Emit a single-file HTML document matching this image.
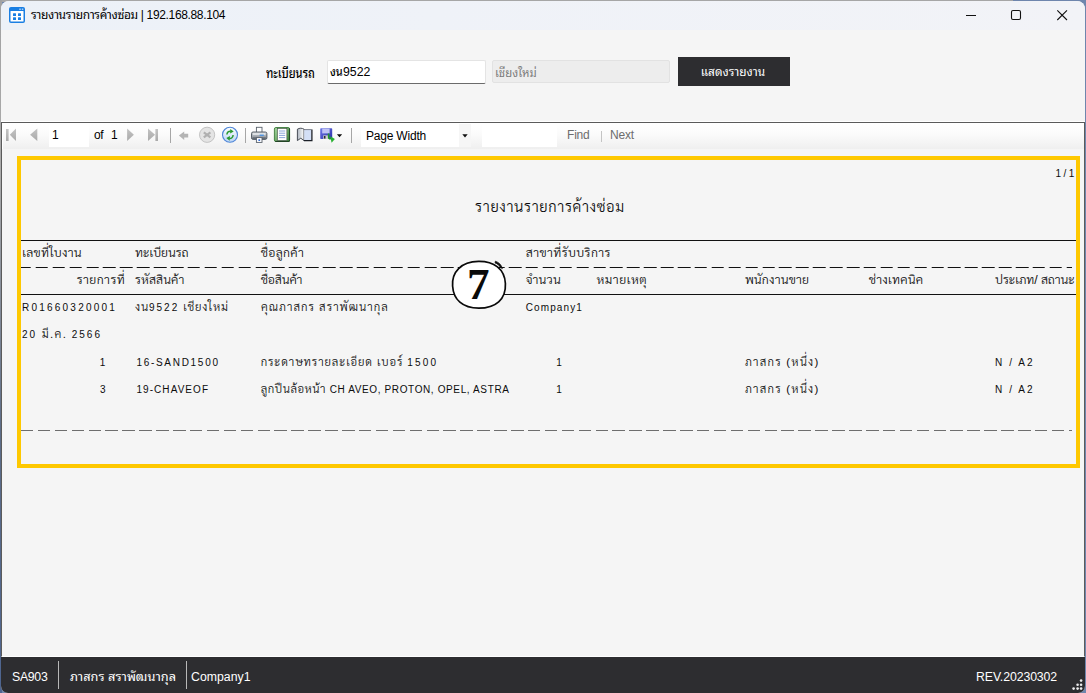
<!DOCTYPE html>
<html lang="th">
<head>
<meta charset="utf-8">
<title>รายงานรายการค้างซ่อม</title>
<style>
*{box-sizing:border-box;margin:0;padding:0}
html,body{width:1086px;height:693px;overflow:hidden}
body{position:relative;background:#6f86ad;
 font-family:"Liberation Sans","Noto Sans Thai Looped","Loma",sans-serif;color:#000}
.abs{position:absolute}
#win{position:absolute;left:1px;top:1px;width:1084px;height:692px;background:#f5f5f5;border-radius:8px 8px 7px 7px;overflow:hidden}
#titlebar{position:absolute;left:0;top:0;width:1084px;height:29px;background:linear-gradient(90deg,#ecf1f8 0,#eff2f8 40%,#f2f3f7 100%)}
#te{position:absolute;left:0;top:0;width:1086px;height:2px;background:linear-gradient(90deg,#a6a6a6 0,#a6a6a6 1013px,#6f86ad 1013px)}
#le{position:absolute;left:0;top:0;width:2px;height:693px;background:linear-gradient(180deg,#a2a2a2 0,#ababab 25%,#5d6d88 62%,#4e6590 100%)}
#titletext{position:absolute;left:30px;top:6px;font-size:12px;line-height:16px;white-space:nowrap;letter-spacing:-0.35px}
.t{position:absolute;white-space:nowrap;line-height:1}
/* form */
#lbl{left:265px;top:63px;font-size:13.9px;font-weight:500;line-height:18px;transform:scaleX(.8);transform-origin:0 0}
#tb1{position:absolute;left:326px;top:59px;width:159px;height:24px;background:#fff;border:1px solid #e4e4e4;border-bottom:1px solid #6b6b6b;border-radius:2px}
#tb1 span{position:absolute;left:2px;top:2px;font-size:12.3px;line-height:18px}
#tb1 b{font-weight:500;font-size:12px;display:inline-block;transform:scaleX(.92);transform-origin:0 50%;margin-right:-1px}
#tb2{position:absolute;left:491px;top:59px;width:178px;height:23px;background:#ededed;border:1px solid #e2e2e2;border-radius:2px}
#tb2 span{position:absolute;left:2px;top:3px;font-size:12.5px;line-height:18px;color:#7b7b7b;transform:scaleX(.91);transform-origin:0 0}
#btn{position:absolute;left:677px;top:56px;width:112px;height:29px;background:#2d2d30;color:#fff;text-align:center;font-size:12.5px;line-height:31px}
#btn span{display:inline-block;transform:scaleX(.95);transform-origin:50% 50%;margin-left:-3px}
/* viewer */
#viewer{position:absolute;left:0;top:120px;width:1084px;height:1px;background:#fff}
#vb{position:absolute;left:0;top:121px;width:1084px;height:535px;border:1px solid #5b5b5b;border-bottom:1px solid #fff;background:#f5f5f5}
#toolbar{position:absolute;left:0;top:0;width:1082px;height:26px;border-left:1px solid #fff;border-top:1px solid #fff;background:linear-gradient(180deg,#ffffff 0,#fbfbfb 40%,#efefef 100%)}
.tbx{position:absolute;background:#fff;top:0;height:23px}
.tt{position:absolute;font-size:12px;line-height:14px;white-space:nowrap}
.sep{position:absolute;top:4px;width:1px;height:15px;background:#a6a6a6}
/* report */
#yel{position:absolute;left:16px;top:155px;width:1063px;height:312px;border:4px solid #fec800}
.r{position:absolute;white-space:nowrap;font-family:"Liberation Sans","Sarabun","Loma",sans-serif;font-weight:300;font-size:11px;line-height:16px;color:#0c0c0c}
.th{font-size:12.3px}
.td{font-size:11.4px}
.r .l{font-size:10px}
.la{font-size:10px}
.title{font-size:14.7px}
.dash{position:absolute;height:1px;background:repeating-linear-gradient(90deg,#111 0,#111 12.5px,transparent 12.5px,transparent 16.9px);background-position:-2.3px 0}
.dash.g{background:repeating-linear-gradient(90deg,#6e6e6e 0,#6e6e6e 12.5px,transparent 12.5px,transparent 16.9px)}
.hl{position:absolute;height:1px;background:#111}
/* status */
#status{position:absolute;left:0;top:656px;width:1084px;height:36px;background:#2d2d30;color:#fff;font-size:12.3px}
#status .t{top:13px;line-height:14px}
#status .n{font-size:12.8px}
.ssep{position:absolute;top:4px;width:1px;height:28px;background:#b8b8b8}
</style>
</head>
<body>
<div id="te"></div><div id="le"></div>
<div id="win">
  <div id="titlebar">
    <svg class="abs" style="left:8px;top:6px" width="16" height="16" viewBox="0 0 16 16">
      <rect x="0" y="0" width="16" height="16" rx="2" fill="#1a7fe3"/>
      <rect x="1.5" y="4" width="13" height="10.5" rx=".5" fill="#fff"/>
      <rect x="4" y="6.3" width="3" height="2.6" rx=".5" fill="#1a7fe3"/>
      <rect x="9" y="6.3" width="3" height="2.6" rx=".5" fill="#1a7fe3"/>
      <rect x="4" y="10.3" width="3" height="2.6" rx=".5" fill="#1a7fe3"/>
      <rect x="9" y="10.3" width="3" height="2.6" rx=".5" fill="#1a7fe3"/>
      <rect x="10.3" y="1.6" width="1.5" height="1.2" fill="#cfe4fa"/>
      <rect x="12.8" y="1.6" width="1.5" height="1.2" fill="#cfe4fa"/>
    </svg>
    <div id="titletext">รายงานรายการค้างซ่อม | 192.168.88.104</div>
    <svg class="abs" style="left:960px;top:5px" width="116" height="20" viewBox="0 0 116 20">
      <path d="M5 9.5H15" stroke="#111" stroke-width="1.1" fill="none"/>
      <rect x="50.5" y="4.5" width="9" height="9" rx="1.5" stroke="#111" stroke-width="1.1" fill="none"/>
      <path d="M96.3 4.3L106 14M106 4.3L96.3 14" stroke="#111" stroke-width="1.1" fill="none"/>
    </svg>
  </div>

  <div class="t" id="lbl">ทะเบียนรถ</div>
  <div id="tb1"><span><b>งน</b>9522</span></div>
  <div id="tb2"><span>เชียงใหม่</span></div>
  <div id="btn"><span>แสดงรายงาน</span></div>

  <div id="viewer"></div><div id="vb">
    <div id="toolbar">
      <svg class="abs" style="left:0;top:0" width="357" height="24" viewBox="3 124 357 24">
        <defs>
          <linearGradient id="gg" x1="0" y1="0" x2="0" y2="1"><stop offset="0" stop-color="#c4c4c4"/><stop offset="1" stop-color="#a9a9a9"/></linearGradient>
          <linearGradient id="gb" x1="0" y1="0" x2="0" y2="1"><stop offset="0" stop-color="#ffffff"/><stop offset="1" stop-color="#b9d3f5"/></linearGradient>
          <linearGradient id="gp" x1="0" y1="0" x2="0" y2="1"><stop offset="0" stop-color="#d2d6db"/><stop offset="1" stop-color="#7d838b"/></linearGradient>
          <linearGradient id="gl" x1="0" y1="0" x2="1" y2="1"><stop offset="0" stop-color="#a6d6a0"/><stop offset="1" stop-color="#3f8a3c"/></linearGradient>
          <linearGradient id="gk" x1="0" y1="0" x2="1" y2="0"><stop offset="0" stop-color="#aeb6c0"/><stop offset="1" stop-color="#ffffff"/></linearGradient>
          <linearGradient id="gf" x1="0" y1="0" x2="1" y2="1"><stop offset="0" stop-color="#6f78e8"/><stop offset="1" stop-color="#2a2fa8"/></linearGradient>
        </defs>
        <!-- first -->
        <rect x="6" y="129" width="2.6" height="12" fill="url(#gg)"/>
        <path d="M9.8 134.7L16 128.4V141Z" fill="url(#gg)"/>
        <!-- prev -->
        <path d="M30.1 134.7L37.3 128.4V141Z" fill="url(#gg)"/>
        <!-- next -->
        <path d="M133.9 134.7L127.1 128.4V141Z" fill="url(#gg)"/>
        <!-- last -->
        <path d="M155 134.7L148 128.4V141Z" fill="url(#gg)"/>
        <rect x="155.4" y="129" width="2.6" height="12" fill="url(#gg)"/>
        <!-- back -->
        <path d="M178.9 135.6L184.2 131.4V133.8H188.2V137.6H184.2V140Z" fill="#b4b4b4"/>
        <!-- stop -->
        <circle cx="207.1" cy="134.8" r="7.6" fill="#e4e4e4" stroke="#c3c3c3" stroke-width="1"/>
        <path d="M203.8 132.4L210.4 137.3M210.4 132.4L203.8 137.3" stroke="#b0b0b0" stroke-width="2.2" fill="none"/>
        <!-- refresh -->
        <circle cx="230" cy="134.8" r="7.5" fill="url(#gb)" stroke="#4f86d8" stroke-width="1.1"/>
        <path d="M226.9 134.6C226.9 132.2 228.8 130.9 230.8 131.2" stroke="#2a9a30" stroke-width="1.5" fill="none"/>
        <path d="M230.3 128.9L233.7 131.5L230.1 133.5Z" fill="#2a9a30"/>
        <path d="M233.1 135C233.1 137.4 231.2 138.7 229.2 138.4" stroke="#2a9a30" stroke-width="1.5" fill="none"/>
        <path d="M229.7 140.7L226.3 138.1L229.9 136.1Z" fill="#2a9a30"/>
        <!-- print -->
        <rect x="256.4" y="127.3" width="5.6" height="5.4" fill="#fff" stroke="#59616b" stroke-width=".9"/>
        <rect x="251.5" y="132" width="15.4" height="7.4" rx="1.6" fill="url(#gp)" stroke="#4c535c" stroke-width=".9"/>
        <rect x="253" y="133.2" width="12.4" height="1.6" fill="#e6e9ec"/>
        <rect x="259.6" y="134.6" width="4.2" height="1.2" fill="#3f8fe6"/>
        <rect x="252.6" y="137.4" width="13.2" height="1.4" fill="#5d646d"/>
        <rect x="256.4" y="137.6" width="5.6" height="4.8" fill="#fff" stroke="#59616b" stroke-width=".9"/>
        <rect x="258.4" y="139.3" width="1.7" height="1.7" fill="#2f6fe0"/>
        <!-- layout -->
        <rect x="274.4" y="127.5" width="15.2" height="14" rx="1.5" fill="url(#gl)" stroke="#3c7a3a" stroke-width=".9"/>
        <path d="M275.2 141.4H289.4V128.4" stroke="#1f3d22" stroke-width="1" fill="none"/>
        <rect x="277.3" y="128.5" width="9.6" height="12" fill="#fff" stroke="#3a463d" stroke-width=".6"/>
        <path d="M279 131H285.2M279 133.2H285.2M279 135.4H285.2M279 137.6H285.2" stroke="#6f8fd0" stroke-width=".8"/>
        <!-- book -->
        <path d="M297.4 129.2C299.5 127.9 302 127.9 304 129.2V140.6L300.8 138.2L297.4 140.6Z" fill="url(#gk)" stroke="#3a4048" stroke-width=".9"/>
        <rect x="304.2" y="129.8" width="7.2" height="10.4" fill="#d3dff6"/>
        <path d="M304 129.6H311.4" stroke="#5a6170" stroke-width=".8" fill="none"/>
        <path d="M304 140.6H311.9V129.4" stroke="#1c2028" stroke-width="1.3" fill="none"/>
        <!-- save -->
        <rect x="320.2" y="128.2" width="12" height="10.8" rx=".8" fill="url(#gf)"/>
        <rect x="322.2" y="128.6" width="7.4" height="4.8" fill="#bfc3f5"/>
        <rect x="323.2" y="135.4" width="5.4" height="3.6" fill="#d0d0d4"/>
        <rect x="323.9" y="136" width="1.6" height="2.6" fill="#2a2a33"/>
        <path d="M328.6 133.4V137C328.6 138.6 329.6 139 330.6 139" stroke="#1f9a28" stroke-width="1.5" fill="none"/>
        <path d="M330.2 136.2L334.9 139.1L331.6 142.8Z" fill="#27b030"/>
        <!-- dropdown -->
        <path d="M336.8 134.3H342.2L339.5 137.3Z" fill="#111"/>
      </svg>
      <div class="tbx" style="left:46px;width:40px"></div>
      <div class="tt" style="left:49px;top:4px">1</div>
      <div class="tt" style="left:91px;top:4px;letter-spacing:-.3px">of</div>
      <div class="tt" style="left:108px;top:4px">1</div>
      <div class="sep" style="left:167px"></div>
      <div class="sep" style="left:242px"></div>
      <div class="sep" style="left:348px"></div>
      <div class="tbx" style="left:358px;width:98px"></div>
      <div class="tbx" style="left:456px;width:12px;background:#f6f6f6"></div>
      <svg class="abs" style="left:458px;top:9px" width="8" height="6" viewBox="0 0 8 6"><path d="M1.3 1.2H6.7L4 4.4Z" fill="#111"/></svg>
      <div class="tt" style="left:363px;top:5px;letter-spacing:-.2px">Page Width</div>
      <div class="tbx" style="left:479px;width:75px"></div>
      <div class="tt" style="left:564px;top:4px;color:#6d6d6d;letter-spacing:-.2px">Find</div>
      <div class="abs" style="left:598px;top:7px;width:1px;height:11px;background:#c4c4c4"></div>
      <div class="tt" style="left:607px;top:4px;color:#6d6d6d;letter-spacing:-.2px">Next</div>
    </div>
  </div>

  <div id="yel"></div>
  <!-- REPORT -->
  <div class="hl" style="left:20px;top:239px;width:1055px"></div>
  <div class="hl" style="left:20px;top:293px;width:1055px"></div>
  <div class="dash" style="left:20px;top:266px;width:1051px"></div>
  <div class="dash g" style="left:20px;top:429px;width:1051px"></div>
  <div class="r la" style="left:1054.5px;top:165.0px;letter-spacing:2.45px">1/1</div>
  <div class="r title" style="left:474.1px;top:198.0px;letter-spacing:0.63px">รายงานรายการค้างซ่อม</div>
  <div class="r th" style="left:21.3px;top:244.0px;letter-spacing:0.24px">เลขที่ใบงาน</div>
  <div class="r th" style="left:134.1px;top:244.0px;letter-spacing:-0.05px">ทะเบียนรถ</div>
  <div class="r th" style="left:259.7px;top:244.0px;letter-spacing:0.3px">ชื่อลูกค้า</div>
  <div class="r th" style="left:524.7px;top:244.0px;letter-spacing:0.42px">สาขาที่รับบริการ</div>
  <div class="r th" style="left:75.7px;top:271.0px;letter-spacing:0.43px">รายการที่</div>
  <div class="r th" style="left:134.1px;top:271.0px;letter-spacing:0.08px">รหัสสินค้า</div>
  <div class="r th" style="left:259.7px;top:271.0px;letter-spacing:-0.13px">ชื่อสินค้า</div>
  <div class="r th" style="left:524.7px;top:271.0px;letter-spacing:0.22px">จำนวน</div>
  <div class="r th" style="left:595.5px;top:271.0px;letter-spacing:0.52px">หมายเหตุ</div>
  <div class="r th" style="left:743.9px;top:271.0px;letter-spacing:0.18px">พนักงานขาย</div>
  <div class="r th" style="left:867.8px;top:271.0px;letter-spacing:0.23px">ช่างเทคนิค</div>
  <div class="r th" style="left:994.1px;top:271.0px;letter-spacing:-0.08px">ประเภท/ สถานะ</div>
  <div class="r la" style="left:21.0px;top:299.0px;letter-spacing:2.22px">R01660320001</div>
  <div class="r td" style="left:134.1px;top:298.0px;letter-spacing:0.79px">งน<span class="l" style="letter-spacing:2.0px">9522</span> เชียงใหม่</div>
  <div class="r td" style="left:259.9px;top:298.0px;letter-spacing:1.02px">คุณภาสกร สราพัฒนากุล</div>
  <div class="r la" style="left:524.7px;top:299.0px;letter-spacing:1.12px">Company1</div>
  <div class="r td" style="left:21.0px;top:325.0px;letter-spacing:1.37px"><span class="l" style="letter-spacing:2.0px">20</span> มี.ค. <span class="l" style="letter-spacing:2.0px">2566</span></div>
  <div class="r la" style="left:98.8px;top:354.0px;letter-spacing:0px">1</div>
  <div class="r la" style="left:135.4px;top:354.0px;letter-spacing:1.71px">16-SAND1500</div>
  <div class="r td" style="left:259.7px;top:353.0px;letter-spacing:0.88px">กระดาษทรายละเอียด เบอร์ <span class="l" style="letter-spacing:2.2px">1500</span></div>
  <div class="r la" style="left:555.3px;top:354.0px;letter-spacing:0px">1</div>
  <div class="r td" style="left:743.9px;top:353.0px;letter-spacing:1.22px">ภาสกร (หนึ่ง)</div>
  <div class="r la" style="left:994.1px;top:354.0px;letter-spacing:2.05px">N / A2</div>
  <div class="r la" style="left:99.1px;top:381.0px;letter-spacing:0px">3</div>
  <div class="r la" style="left:135.4px;top:381.0px;letter-spacing:1.07px">19-CHAVEOF</div>
  <div class="r td" style="left:259.7px;top:380.0px;letter-spacing:0.52px">ลูกปืนล้อหน้า <span class="l" style="letter-spacing:0.62px">CH AVEO, PROTON, OPEL, ASTRA</span></div>
  <div class="r la" style="left:555.3px;top:381.0px;letter-spacing:0px">1</div>
  <div class="r td" style="left:743.9px;top:380.0px;letter-spacing:1.22px">ภาสกร (หนึ่ง)</div>
  <div class="r la" style="left:994.1px;top:381.0px;letter-spacing:2.05px">N / A2</div>
  <!-- /REPORT -->
  <svg class="abs" style="left:445px;top:254px" width="66" height="60" viewBox="446 255 66 60">
    <path d="M452.6 286C451.6 272 461 261.6 478.5 261.4C494 261.2 504.6 269 505.4 283.5C506.2 299.5 495.5 308.2 478.8 308.2C462.5 308.2 453.4 299.6 452.6 286Z" fill="#fff" stroke="#0a0a0a" stroke-width="1.7"/>
    <path d="M495.4 261.2C499 262.4 501.4 264.8 502.4 268.6L500.4 267.6C499.2 265.2 497.6 263.8 495 262.9Z" fill="#0a0a0a" stroke="#0a0a0a" stroke-width=".7" stroke-linejoin="round"/>
    <text x="478.2" y="299.2" text-anchor="middle" font-family="'Liberation Serif',serif" font-weight="700" font-size="45" fill="#0a0a0a">7</text>
  </svg>
  <!-- /SEVEN -->

  <div id="status">
    <div class="t" style="left:11px;letter-spacing:-.3px">SA903</div>
    <div class="ssep" style="left:57px"></div>
    <div class="t n" style="left:69px">ภาสกร สราพัฒนากุล</div>
    <div class="ssep" style="left:185px"></div>
    <div class="t" style="left:190px">Company1</div>
    <div class="t" style="left:975px;letter-spacing:-.1px">REV.20230302</div>
    <svg class="abs" style="left:1070px;top:22px" width="13" height="13" viewBox="0 0 13 13">
      <g fill="#ececec"><circle cx="10.1" cy="1.6" r="1.3"/><circle cx="6.6" cy="5.8" r="1.3"/><circle cx="10.1" cy="5.8" r="1.3"/><circle cx="2.6" cy="9.6" r="1.3"/><circle cx="6.6" cy="9.6" r="1.3"/><circle cx="10.1" cy="9.6" r="1.3"/></g>
    </svg>
  </div>
</div>
</body>
</html>
